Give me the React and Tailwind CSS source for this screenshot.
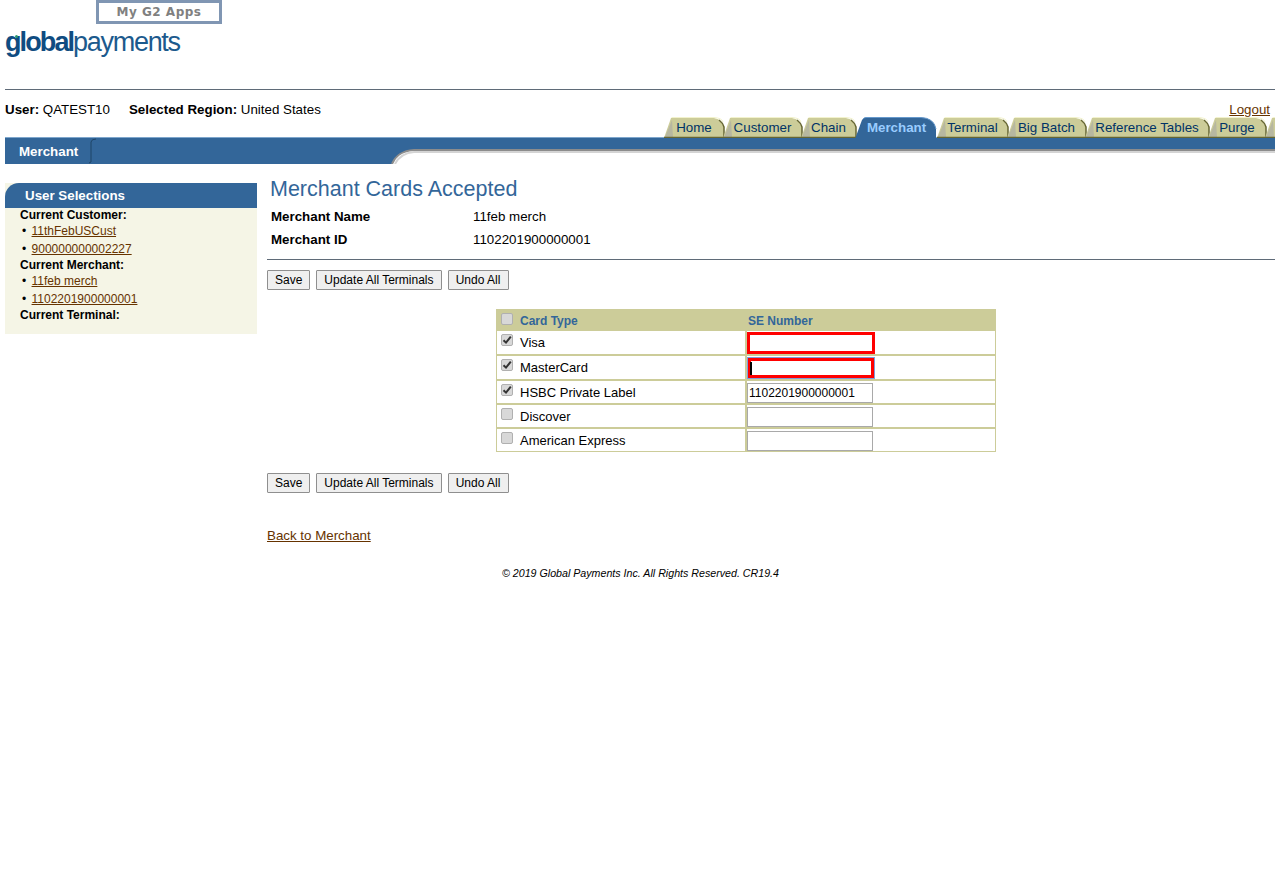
const LINK = "text-[#663300] underline";

function Tab({ label, width, active }) {
  const w = width;
  return (
    <div className="relative h-[21px] shrink-0" style={{ width: w }}>
      {active ? (
        <svg className="absolute left-0 top-0" width={w + 2} height="22" viewBox={`0 0 ${w + 2} 22`}>
          <path d={`M0 22 L7 3 Q8 0.5 11 0.5 L${w - 16} 0.5 Q${w - 3} 1 ${w - 1} 12 L${w - 1} 22 Z`} fill="#336699" />
          <path d={`M8 2 Q9 0.5 11 0.5 L${w - 16} 0.5 Q${w - 3} 1 ${w - 1} 12`} fill="none" stroke="#6699cc" />
        </svg>
      ) : (
        <svg className="absolute left-0 top-0" width={w + 4} height="22" viewBox={`0 0 ${w + 4} 22`}>
          <path d={`M0 21 L7 1 L${w - 9} 1 Q${w - 1} 2 ${w + 1} 10 L${w + 1} 21 Z`} fill="#cccc99" />
          <path d="M1 20 L8 3 L9 20 Z" fill="#b7b7a0" />
          <path d={`M7.5 0.5 L${w - 9} 0.5 Q${w - 1} 1 ${w} 5`} fill="none" stroke="#f2f2cc" />
          <path d={`M${w - 4} 3 Q${w} 6 ${w + 1} 10 L${w + 1} 20`} fill="none" stroke="#666633" strokeWidth="1.5" />
          <path d={`M0 20.5 L${w + 1} 20.5`} stroke="#666633" strokeWidth="1.5" />
        </svg>
      )}
      <div
        className={`absolute inset-0 flex items-center justify-center pl-[2px] pr-[1px] pt-[1px] text-[13.33px] leading-none whitespace-nowrap ${
          active ? "font-bold text-[#99ccff]" : "text-[#003366]"
        }`}
      >
        {label}
      </div>
    </div>
  );
}

function Btn({ children, className = "" }) {
  return (
    <button className={`h-[20px] rounded-[1px] border border-[#8f8f8f] bg-[#efefef] px-[7px] text-[12px] leading-none text-black ${className}`}>
      {children}
    </button>
  );
}

function Buttons() {
  return (
    <div className="flex gap-[6px]">
      <Btn>Save</Btn>
      <Btn>Update All Terminals</Btn>
      <Btn className="w-[61px]">Undo All</Btn>
    </div>
  );
}

function Check({ checked }) {
  return (
    <span className="ml-[4px] flex h-[12px] w-[12px] shrink-0 items-center justify-center rounded-[2px] border border-[#b0b0b0] bg-[#d8d8d8]">
      {checked && (
        <svg width="10" height="10" viewBox="0 0 10 10">
          <path d="M1.5 5.2 L4 7.6 L8.8 1.6" fill="none" stroke="#333" strokeWidth="2" />
        </svg>
      )}
    </span>
  );
}

function Row({ name, checked, input, height }) {
  return (
    <div className="flex border-t-2 border-[#cccc99]" style={{ height }}>
      <div className="flex w-[250px] items-start border-r-2 border-[#cccc99]">
        <div className="mt-[3px]"><Check checked={checked} /></div>
        <span className="ml-[7px] mt-[4px] text-[13px] leading-[15px] text-black">{name}</span>
      </div>
      {input}
    </div>
  );
}

function Field({ value, error, focused }) {
  if (error && focused) {
    return (
      <div className="ml-[1px] mt-[2px] flex h-[20px] w-[126px] items-center border-[3px] border-[#ff0000] bg-white outline outline-1 outline-[#7f9ddb]">
        <span className="-ml-px h-[13px] w-[2px] bg-black" />
      </div>
    );
  }
  if (error) {
    return <div className="mt-[1px] h-[22px] w-[128px] border-[3px] border-[#ff0000] bg-white" />;
  }
  return (
    <div className="mt-[2px] flex h-[20px] w-[126px] items-center border border-[#a9a9a9] bg-white pl-[1px] text-[12px] leading-none text-black">
      {value}
    </div>
  );
}

export default function App() {
  return (
    <div
      className="min-h-[869px] w-[1280px] overflow-hidden bg-white pl-[5px] text-[13.33px] text-black"
      style={{ fontFamily: '"Liberation Sans", Arial, sans-serif' }}
    >
      <div className="w-[1270px]">
        {/* Header */}
        <div className="relative h-[90px] border-b border-[#5f6b78]">
          <div
            className="absolute left-[91px] top-0 flex h-[24px] w-[126px] items-center justify-center border-[3px] border-[#8096b3] bg-white pb-[1px] text-[12px] font-bold tracking-[0.5px] text-[#808080]"
            style={{ fontFamily: '"DejaVu Sans", sans-serif' }}
          >
            My G2 Apps
          </div>
          <div className="absolute left-0 top-[25px] whitespace-nowrap text-[27px] leading-[34px] text-[#0f4c81]">
            <span className="font-bold tracking-[-1.9px]">global</span>
            <span className="tracking-[-1.3px] text-[#1c5a8d]">payments</span>
          </div>
          <span className="absolute left-[10px] top-[35px] h-[3px] w-[3px] rounded-full bg-[#2e9a6c]" />
        </div>

        {/* User line */}
        <div className="relative h-[47px]">
          <div className="pt-[12px] text-[13.33px] leading-[16px]">
            <span className="font-bold">User:</span> QATEST10
            <span className="ml-[19px] font-bold">Selected Region:</span> United States
          </div>
          <a className={`absolute right-[5px] top-[12px] text-[13.33px] leading-[16px] ${LINK}`}>Logout</a>
          <div className="absolute bottom-[-1px] left-[659px] z-10 flex h-[21px] w-[611px] overflow-hidden">
            <Tab label="Home" width={59} />
            <Tab label="Customer" width={78} />
            <Tab label="Chain" width={54} />
            <Tab label="Merchant" width={82} active />
            <Tab label="Terminal" width={70} />
            <Tab label="Big Batch" width={78} />
            <Tab label="Reference Tables" width={123} />
            <Tab label="Purge" width={57} />
            <Tab label="" width={20} />
          </div>
        </div>

        {/* Sub nav */}
        <div className="relative h-[27px] overflow-hidden border-t border-[#7ea6cc] bg-[#336699]">
          <div className="flex h-full items-center">
            <span className="ml-[14px] pt-[1px] text-[13.33px] font-bold leading-none text-white">Merchant</span>
            <svg className="ml-[11px]" width="8" height="26" viewBox="0 0 8 26">
              <path d="M0 25 L2 24 L2 4 Q2.5 1 7 1" fill="none" stroke="#1f4466" strokeWidth="1" />
            </svg>
          </div>
          <svg className="absolute left-[385px] top-[11px]" width="885" height="15" viewBox="0 0 885 15">
            <path d="M2 15 C5 8 10 2 24 1 L885 1 L885 15 Z" fill="#ffffff" />
            <path d="M2 15 C5 8 10 2 24 1 L885 1" fill="none" stroke="#8c8c8c" strokeWidth="2" />
            <path d="M5 15 C8 9 13 4 24 3 L885 3" fill="none" stroke="#d4d4d4" strokeWidth="2" />
          </svg>
        </div>

        {/* Body */}
        <div className="flex">
          <aside className="mt-[19px] h-[151px] w-[252px] shrink-0 bg-[#f5f5e6]">
            <div className="flex h-[25px] items-center rounded-tl-[14px] bg-[#336699] pl-[20px] text-[13.33px] font-bold leading-none text-white">
              User Selections
            </div>
            <div className="pl-[15px] text-[12px]">
              <div className="h-[15px] font-bold leading-[14px]">Current Customer:</div>
              <div className="h-[19px] pl-[2px] leading-[17px]">• <a className={`ml-[2px] ${LINK}`}>11thFebUSCust</a></div>
              <div className="h-[16px] pl-[2px] leading-[15px]">• <a className={`ml-[2px] ${LINK}`}>900000000002227</a></div>
              <div className="h-[15px] font-bold leading-[15px]">Current Merchant:</div>
              <div className="h-[19px] pl-[2px] leading-[17px]">• <a className={`ml-[2px] ${LINK}`}>11feb merch</a></div>
              <div className="h-[16px] pl-[2px] leading-[15px]">• <a className={`ml-[2px] ${LINK}`}>1102201900000001</a></div>
              <div className="h-[15px] font-bold leading-[15px]">Current Terminal:</div>
            </div>
          </aside>

          <main className="ml-[10px] min-w-0 flex-1">
            <h1 className="ml-[3px] mt-[13px] text-[21.5px] font-normal leading-[24px] text-[#336699]">
              Merchant Cards Accepted
            </h1>
            <div className="ml-[4px] mt-[4px] flex h-[23px] items-center">
              <span className="w-[202px] font-bold leading-none">Merchant Name</span>
              <span className="leading-none">11feb merch</span>
            </div>
            <div className="ml-[4px] flex h-[23px] items-center">
              <span className="w-[202px] font-bold leading-none">Merchant ID</span>
              <span className="leading-none">1102201900000001</span>
            </div>
            <div className="mt-[8px] h-px bg-[#5f6b78]" />
            <div className="mt-[10px]"><Buttons /></div>

            {/* Table */}
            <div className="ml-[229px] mt-[19px] w-[500px] border-x border-b border-[#cccc99]">
              <div className="flex h-[20px] items-start bg-[#cccc99]">
                <div className="flex w-[250px] items-start">
                  <div className="mt-[4px]"><Check /></div>
                  <span className="ml-[7px] mt-[5px] text-[12px] font-bold leading-[15px] text-[#336699]">Card Type</span>
                </div>
                <span className="mt-[5px] pl-[1px] text-[12px] font-bold leading-[15px] text-[#336699]">SE Number</span>
              </div>
              <Row name="Visa" checked height={25} input={<Field error />} />
              <Row name="MasterCard" checked height={25} input={<Field error focused />} />
              <Row name="HSBC Private Label" checked height={24} input={<Field value="1102201900000001" />} />
              <Row name="Discover" height={24} input={<Field />} />
              <Row name="American Express" height={24} input={<Field />} />
            </div>

            <div className="mt-[21px]"><Buttons /></div>
            <div className="mt-[35px] text-[13.33px] leading-[16px]"><a className={LINK}>Back to Merchant</a></div>
            <div className="mt-[23px] w-[747px] text-center text-[10.67px] italic leading-[12px]">
              © 2019 Global Payments Inc. All Rights Reserved. CR19.4
            </div>
          </main>
        </div>
      </div>
    </div>
  );
}
